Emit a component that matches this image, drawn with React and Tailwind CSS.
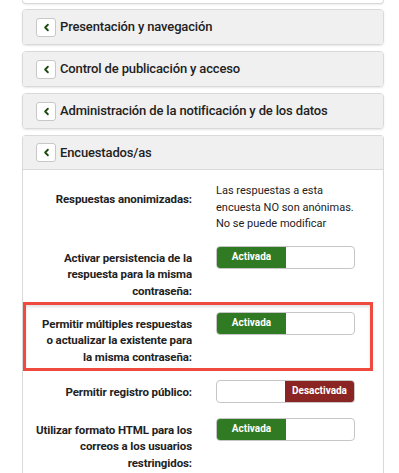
import React from "react";
import { ChevronLeft } from "lucide-react";

const font = { fontFamily: "Roboto, 'Liberation Sans', sans-serif" };

const PanelHeader = ({ title, last }) => (
  <div
    className={
      "flex items-center h-[34px] bg-[#f0f0f0] pl-[13px] " +
      (last ? "border-b border-[#d9d9d9]" : "")
    }
  >
    <span className="w-[20px] h-[19px] flex items-center justify-center bg-white border border-[#c8c8c8] rounded-[3px]">
      <ChevronLeft size={11} strokeWidth={4} className="text-[#1f4a12]" />
    </span>
    <span className="ml-[4px] text-[13px] font-medium tracking-[-0.15px] text-[#222]">{title}</span>
  </div>
);

const Toggle = ({ on }) => (
  <div className="flex w-[139px] h-[23px] border border-[#c6c6c6] rounded-[4px] bg-white overflow-hidden">
    {on ? (
      <>
        <div className="w-[69px] bg-[#2f7a22] text-white text-[10px] font-bold flex items-center justify-center pb-[2px]">
          Activada
        </div>
        <div className="flex-1" />
      </>
    ) : (
      <>
        <div className="flex-1" />
        <div className="w-[69px] bg-[#8b2524] text-white text-[10px] font-bold flex items-center justify-center pb-[2px]">
          Desactivada
        </div>
      </>
    )}
  </div>
);

const Row = ({ lines, children, mb = "mb-[13px]" }) => (
  <div className={"flex " + mb}>
    <div className="w-[169px] pt-[4px] text-right text-[11.5px] font-bold tracking-[-0.1px] leading-[16.5px] text-[#222] whitespace-nowrap">
      {lines.map((l, i) => (
        <div key={i}>{l}</div>
      ))}
    </div>
    <div className="ml-[24px]">{children}</div>
  </div>
);

export default function App() {
  return (
    <div className="bg-white h-[473px] overflow-hidden" style={font}>
      <div className="ml-[22px] w-[362px]">
        {/* previous panel (cut off) */}
        <div className="h-[4px] border-x border-b border-[#d9d9d9] rounded-b-[4px] shadow-[0_1px_2px_rgba(0,0,0,0.08)] mb-[5px]" />

        <div className="border border-[#d9d9d9] rounded-[4px] shadow-[0_1px_2px_rgba(0,0,0,0.1)] mb-[6px] overflow-hidden">
          <PanelHeader title="Presentación y navegación" />
        </div>
        <div className="border border-[#d9d9d9] rounded-[4px] shadow-[0_1px_2px_rgba(0,0,0,0.1)] mb-[6px] overflow-hidden">
          <PanelHeader title="Control de publicación y acceso" />
        </div>
        <div className="border border-[#d9d9d9] rounded-[4px] shadow-[0_1px_2px_rgba(0,0,0,0.1)] mb-[6px] overflow-hidden">
          <PanelHeader title="Administración de la notificación y de los datos" />
        </div>

        <div className="border-x border-t border-[#d9d9d9] rounded-t-[4px] h-[400px]">
          <PanelHeader title="Encuestados/as" last />
          <div className="pt-[13px]">
            <div className="flex mb-[13px]">
              <div className="w-[169px] pt-[8px] text-right text-[11.5px] font-bold tracking-[-0.1px] leading-[16.5px] text-[#222]">
                Respuestas anonimizadas:
              </div>
              <div className="ml-[24px] text-[11px] leading-[16.5px] text-[#222]">
                Las respuestas a esta
                <br />
                encuesta NO son anónimas.
                <br />
                No se puede modificar
              </div>
            </div>

            <Row
              lines={["Activar persistencia de la", "respuesta para la misma", "contraseña:"]}
              mb="mb-[12.5px]"
            >
              <Toggle on />
            </Row>

            <div className="relative mb-[14.5px]">
              <Row
                lines={["Permitir múltiples respuestas", "o actualizar la existente para", "la misma contraseña:"]}
                mb="mb-0"
              >
                <Toggle on />
              </Row>
              {/* highlight frame */}
              <div className="absolute left-0 top-[-10px] w-[350px] h-[69px] border-[3px] border-[#ee4a3e] shadow-[inset_0_2px_3px_rgba(0,0,0,0.12)] pointer-events-none" />
            </div>

            <Row lines={["Permitir registro público:"]} mb="mb-[15px]">
              <Toggle on={false} />
            </Row>

            <Row lines={["Utilizar formato HTML para los", "correos a los usuarios", "restringidos:"]}>
              <Toggle on />
            </Row>
          </div>
        </div>
      </div>
    </div>
  );
}
